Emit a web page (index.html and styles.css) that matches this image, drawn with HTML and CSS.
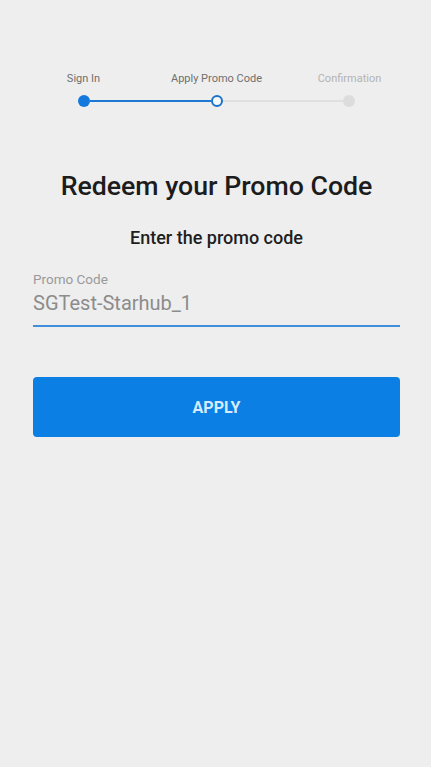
FILE: index.html
```html
<!DOCTYPE html>
<html lang="en">
<head>
    <meta charset="UTF-8">
    <meta name="viewport" content="width=device-width, initial-scale=1.0">
    <title>Redeem Promo Code</title>
    <link rel="stylesheet" href="styles.css">
</head>
<body>
    <div class="page">
        <div class="stepper">
            <ul class="labels">
                <li class="done">Sign In</li>
                <li class="current">Apply Promo Code</li>
                <li>Confirmation</li>
            </ul>
            <div class="track">
                <span class="dot done"></span>
                <span class="line done"></span>
                <span class="dot current"></span>
                <span class="line"></span>
                <span class="dot"></span>
            </div>
        </div>

        <h1 class="title">Redeem your Promo Code</h1>
        <p class="subtitle">Enter the promo code</p>

        <div class="field">
            <label class="field-label">Promo Code</label>
            <div class="field-value">SGTest-Starhub_1</div>
        </div>

        <div class="btn-apply">APPLY</div>
    </div>
</body>
</html>
```

FILE: styles.css
```css
*{
    margin: 0;
    padding: 0;
    box-sizing: border-box;
}
li{
    list-style: none;
}
body{
    background-color: #eeeeee;
    font-family: Roboto, "Liberation Sans", sans-serif;
    width: 431px;
    height: 767px;
}
.page{
    padding: 72px 31px 0 33px;
}

/* stepper */
.stepper{
    margin: 0 -31px 0 -33px;
}
.labels{
    display: grid;
    grid-template-columns: 133px 133px 133px;
    padding-left: 17px;
    font-size: 11px;
    line-height: 13px;
    color: #8a8a8a;
    text-align: center;
}
.labels .done,
.labels .current{
    color: #6f6f6f;
}
.labels li:last-child{
    color: #b3b3b3;
}
.track{
    display: flex;
    align-items: center;
    width: 277px;
    margin: 10px 0 0 78px;
}
.dot{
    width: 12px;
    height: 12px;
    border-radius: 50%;
    background-color: #dcdcdc;
    flex: none;
}
.dot.done{
    background-color: #1479dc;
}
.dot.current{
    background-color: #f4f8fc;
    border: 2.5px solid #1a73c8;
}
.line{
    flex: 1;
    height: 2px;
    background-color: #e0e0e0;
}
.line.done{
    background-color: #1c78d0;
}

/* headings */
.title{
    margin-top: 64px;
    font-size: 26.7px;
    line-height: 30px;
    font-weight: 500;
    color: #1c1c1c;
    text-align: center;
}
.subtitle{
    margin-top: 26px;
    font-size: 18px;
    line-height: 22px;
    font-weight: 500;
    color: #1e1e1e;
    text-align: center;
}

/* input */
.field{
    margin-top: 22px;
    border-bottom: 2px solid #3f8fdc;
    padding-bottom: 10px;
}
.field-label{
    display: block;
    font-size: 13.5px;
    line-height: 16px;
    color: #9a9a9a;
}
.field-value{
    margin-top: 4px;
    font-size: 20px;
    line-height: 24px;
    color: #8c8c8c;
}

/* button */
.btn-apply{
    margin-top: 50px;
    height: 60px;
    border-radius: 4px;
    background-color: #0b7fe3;
    color: #d6ebff;
    font-size: 16px;
    font-weight: 700;
    display: flex;
    align-items: center;
    justify-content: center;
}
```
